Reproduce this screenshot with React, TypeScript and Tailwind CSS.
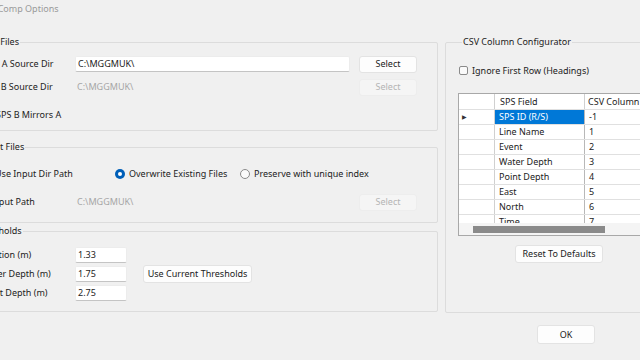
const fieldRows = [
  { field: 'SPS ID (R/S)', col: '-1' },
  { field: 'Line Name', col: '1' },
  { field: 'Event', col: '2' },
  { field: 'Water Depth', col: '3' },
  { field: 'Point Depth', col: '4' },
  { field: 'East', col: '5' },
  { field: 'North', col: '6' },
  { field: 'Time', col: '7' },
]

// ─── Small controls ───────────────────────────────────────────
const Button = ({ label, disabled, className = '' }: { label: string; disabled?: boolean; className?: string }) => (
  <div
    className={`flex items-center justify-center rounded-[3px] border ${
      disabled
        ? 'bg-[#f5f5f5] border-[#ededed] text-[#b4b4b4]'
        : 'bg-[#fdfdfd] border-[#e3e3e3] text-[#1b1b1b]'
    } ${className}`}
  >
    {label}
  </div>
)

const TextBox = ({ value, className = '' }: { value: string; className?: string }) => (
  <div className={`flex items-center bg-white border border-[#ececec] border-b-[#c4c4c4] rounded-[2px] pl-[2px] ${className}`}>
    {value}
  </div>
)

const CheckBox = ({ label }: { label: string }) => (
  <div className="flex items-center gap-[4px]">
    <span className="w-[9px] h-[9px] rounded-[2px] border border-[#8a8a8a] bg-[#fafafa]" />
    <span>{label}</span>
  </div>
)

const Radio = ({ label, checked }: { label: string; checked?: boolean }) => (
  <div className="flex items-center gap-[4px]">
    {checked ? (
      <span className="w-[10px] h-[10px] rounded-full bg-[#005fb8] flex items-center justify-center">
        <span className="w-[4px] h-[4px] rounded-full bg-white" />
      </span>
    ) : (
      <span className="w-[10px] h-[10px] rounded-full border border-[#8a8a8a] bg-[#fafafa]" />
    )}
    <span>{label}</span>
  </div>
)

// ─── Main ─────────────────────────────────────────────────────
export default function App() {
  return (
    <div className="w-[640px] h-[360px] overflow-hidden bg-[#f0f0f0] text-[9px] leading-[12px] text-[#222] font-['Noto_Sans',sans-serif]">
      {/* title bar */}
      <div className="h-[17px] flex items-center">
        <span className="ml-[-20px] text-[#9a9a9a]">SPS Comp Options</span>
      </div>

      <div className="flex mt-[19px] ml-[-40px] gap-[7px] h-[277px]">
        {/* ── LEFT column ───────────────────────────── */}
        <div className="w-[479px] flex flex-col">
          <fieldset className="border border-[#dcdcdc] rounded-[2px] pl-[22px] pr-[20px] pt-[8px] pb-[7px]">
            <legend className="ml-[-9px] px-[1px]">Input Files</legend>
            <div className="flex items-center h-[16px]">
              <span className="w-[92px] pl-[1px]">SPS A Source Dir</span>
              <TextBox value="C:\MGGMUK\" className="w-[275px] h-[16px]" />
              <Button label="Select" className="ml-[9px] w-[58px] h-[17px]" />
            </div>
            <div className="flex items-center h-[16px] mt-[7px]">
              <span className="w-[92px]">SPS B Source Dir</span>
              <span className="w-[275px] pl-[2px] text-[#a6a6a6]">C:\MGGMUK\</span>
              <Button label="Select" disabled className="ml-[9px] w-[58px] h-[17px]" />
            </div>
            <div className="flex items-center h-[16px] mt-[12px]">
              <CheckBox label="SPS B Mirrors A" />
            </div>
          </fieldset>

          <fieldset className="mt-[10px] border border-[#dcdcdc] rounded-[2px] pl-[22px] pr-[20px] pt-[13px] pb-[12px]">
            <legend className="ml-[-11px] px-[1px]">Output Files</legend>
            <div className="flex items-center h-[16px]">
              <div className="w-[132px] ml-[-1px] mr-[1px]">
                <CheckBox label="Use Input Dir Path" />
              </div>
              <div className="w-[125px]">
                <Radio label="Overwrite Existing Files" checked />
              </div>
              <Radio label="Preserve with unique index" />
            </div>
            <div className="flex items-center h-[16px] mt-[12px]">
              <span className="w-[92px]">Output Path</span>
              <span className="w-[275px] pl-[2px] text-[#a6a6a6]">C:\MGGMUK\</span>
              <Button label="Select" disabled className="ml-[9px] w-[58px] h-[17px]" />
            </div>
          </fieldset>

          <fieldset className="mt-[2px] border border-[#dcdcdc] rounded-[2px] pl-[22px] pr-[20px] pt-[10px] pb-[10px]">
            <legend className="ml-[-9px] px-[1px]">Thresholds</legend>
            <div className="flex items-center">
              <div className="flex flex-col gap-[3px]">
                {[
                  ['Position (m)', '1.33'],
                  ['Water Depth (m)', '1.75'],
                  ['Point Depth (m)', '2.75'],
                ].map(([label, value]) => (
                  <div key={label} className="flex items-center h-[16px]">
                    <span className="w-[92px] ml-[-2px] mr-[2px]">{label}</span>
                    <TextBox value={value} className="w-[52px] h-[16px]" />
                  </div>
                ))}
              </div>
              <Button label="Use Current Thresholds" className="ml-[16px] w-[109px] h-[18px]" />
            </div>
          </fieldset>
        </div>

        {/* ── RIGHT column — CSV configurator ───────── */}
        <fieldset className="w-[215px] border border-[#dcdcdc] rounded-[2px] pl-[12px] pt-[15px]">
          <legend className="ml-[4px] px-[1px]">CSV Column Configurator</legend>
          <div className="h-[15px] flex items-center pl-[1px]">
            <CheckBox label="Ignore First Row (Headings)" />
          </div>

          {/* data grid */}
          <div className="mt-[15px] w-[220px] h-[143px] border border-[#a8a8a8] bg-white flex flex-col overflow-hidden">
            <div className="h-[129px] overflow-hidden">
              <div className="flex h-[16px] border-b border-[#e0e0e0]">
                <div className="w-[36px] border-r border-[#d0d0d0]" />
                <div className="w-[90px] pl-[5px] flex items-center border-r border-[#d0d0d0]">SPS Field</div>
                <div className="flex-1 pl-[3px] flex items-center">CSV Column</div>
              </div>
              {fieldRows.map((r, i) => (
                <div key={r.field} className="flex h-[15px] border-b border-[#e0e0e0]">
                  <div className="w-[36px] border-r border-[#d0d0d0] flex items-center pl-[3px]">
                    {i === 0 && <span className="text-[6px] leading-[6px] text-[#333]">▶</span>}
                  </div>
                  <div
                    className={`w-[90px] pl-[4px] flex items-center border-r border-[#b8b8b8] ${
                      i === 0 ? 'bg-[#0078d7] text-white' : ''
                    }`}
                  >
                    {r.field}
                  </div>
                  <div className="flex-1 pl-[4px] flex items-center">{r.col}</div>
                </div>
              ))}
            </div>
            {/* horizontal scrollbar */}
            <div className="h-[12px] bg-[#f4f4f4] flex items-center">
              <div className="ml-[14px] w-[132px] h-[7px] bg-[#8a8a8a]" />
            </div>
          </div>

          <div className="flex mt-[9px] pl-[57px]">
            <Button label="Reset To Defaults" className="w-[88px] h-[18px]" />
          </div>
        </fieldset>
      </div>

      {/* bottom bar */}
      <div className="flex justify-end mt-[12px] pr-[45px]">
        <Button label="OK" className="w-[58px] h-[19px]" />
      </div>
    </div>
  )
}
